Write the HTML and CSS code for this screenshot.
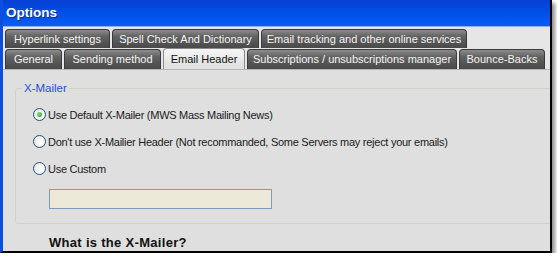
FILE: index.html
```html
<!DOCTYPE html>
<html lang="en">
<head>
  <meta charset="UTF-8">
  <title>Options</title>
  <link rel="stylesheet" href="styles.css">
</head>
<body>

  <div class="window">
    <div class="titlebar">Options</div>

    <div class="tabs">
      <div class="tab-row">
        <div class="tab w-hyperlink">Hyperlink settings</div>
        <div class="tab w-spell">Spell Check And Dictionary</div>
        <div class="tab w-tracking">Email tracking and other online services</div>
      </div>
      <div class="tab-row front">
        <div class="tab w-general">General</div>
        <div class="tab w-sending">Sending method</div>
        <div class="tab active w-header">Email Header</div>
        <div class="tab w-subs">Subscriptions / unsubscriptions manager</div>
        <div class="tab w-bounce">Bounce-Backs</div>
      </div>
    </div>

    <div class="panel">
      <fieldset class="group">
        <legend>X-Mailer</legend>
        <div class="option"><span class="radio checked"></span>Use Default X-Mailer (MWS Mass Mailing News)</div>
        <div class="option"><span class="radio"></span>Don't use X-Mailier Header (Not recommanded, Some Servers may reject your emails)</div>
        <div class="option"><span class="radio"></span>Use Custom</div>
        <div class="custom-input"></div>
      </fieldset>
      <h3 class="help-title">What is the X-Mailer?</h3>
    </div>
  </div>

</body>
</html>
```

FILE: styles.css
```css
/* Reset */
* {
  margin: 0;
  padding: 0;
  box-sizing: border-box;
}

body {
  background: #ffffff;
  font-family: 'Liberation Sans', Arial, sans-serif;
  font-size: 11px;
  color: #111;
}

/* Window frame */
.window {
  width: 552px;
  height: 253px;
  display: flex;
  flex-direction: column;
  background: #e4e4e4;
  border-left: 3px solid #0a4fe0;
  border-right: 2px solid #000;
  border-bottom: 2px solid #000;
  box-shadow: 3px 3px 4px rgba(0, 0, 0, 0.45);
  overflow: hidden;
}

.titlebar {
  height: 27px;
  padding-left: 3px;
  line-height: 26px;
  color: #fff;
  font-weight: bold;
  font-size: 13.5px;
  background: linear-gradient(to bottom, #0840d4, #0050e8 50%, #0a5cf2);
  border-bottom: 1px solid #8fb0f0;
  text-shadow: 1px 1px 0 #0a2d8a;
}

/* Tabs */
.tabs {
  padding: 2px 0 0 2px;
  background: #e6e6e6;
}

.tab-row {
  display: flex;
  gap: 2px;
  height: 19px;
}

.tab-row.front {
  height: 21px;
  align-items: flex-end;
}

.tab {
  height: 19px;
  line-height: 18px;
  text-align: center;
  color: #f4f4f4;
  background: linear-gradient(to bottom, #8c8c8c, #636363 35%, #545454 70%, #4a4a4a);
  border: 1px solid #3a3a3a;
  border-bottom: none;
  border-radius: 4px 4px 0 0;
  white-space: nowrap;
}

.tab-row.front .tab {
  height: 20px;
  line-height: 19px;
}

.tab-row.front .tab.active {
  height: 22px;
  line-height: 21px;
  margin-bottom: -1px;
  color: #111;
  background: linear-gradient(to bottom, #f6f6f6, #e6e6e6 60%, #dfdfdf);
  border-color: #8a8a8a;
}

.w-hyperlink { width: 105px; }
.w-spell { width: 147px; }
.w-tracking { width: 206px; }
.w-general { width: 57px; }
.w-sending { width: 97px; }
.w-header { width: 82px; }
.w-subs { width: 210px; }
.w-bounce { width: 86px; }

/* Tab page */
.panel {
  flex: 1;
  background: #dfdfdf;
  border-top: 1px solid #b4b4b4;
  padding: 0 0 0 12px;
  overflow: hidden;
}

.group {
  margin: 12px -40px 0 0;
  padding: 6px 0 14px 17px;
  border: 1px solid #d2d2c2;
  border-radius: 3px;
}

.group legend {
  margin-left: -11px;
  padding: 0 2px;
  line-height: 13px;
  font-size: 11.5px;
  color: #1d4fd6;
}

.option {
  display: flex;
  align-items: center;
  gap: 2px;
  height: 27px;
  font-size: 11px;
  letter-spacing: -0.27px;
  color: #1a1a1a;
}

.radio {
  width: 13px;
  height: 13px;
  border: 1px solid #1c5180;
  border-radius: 50%;
  background: radial-gradient(circle at 65% 65%, #ffffff, #e4e4dc);
  display: flex;
  align-items: center;
  justify-content: center;
}

.radio.checked::after {
  content: '';
  width: 5px;
  height: 5px;
  border-radius: 50%;
  background: radial-gradient(circle at 35% 35%, #7fe07f, #1f9c1f);
}

.custom-input {
  width: 223px;
  height: 20px;
  margin: 7px 0 0 16px;
  background: #ece9d8;
  border: 1px solid #7f9db9;
}

.help-title {
  margin: 12px 0 0 34px;
  font-size: 13px;
  line-height: 14px;
  letter-spacing: 0.3px;
  color: #111;
}
```
